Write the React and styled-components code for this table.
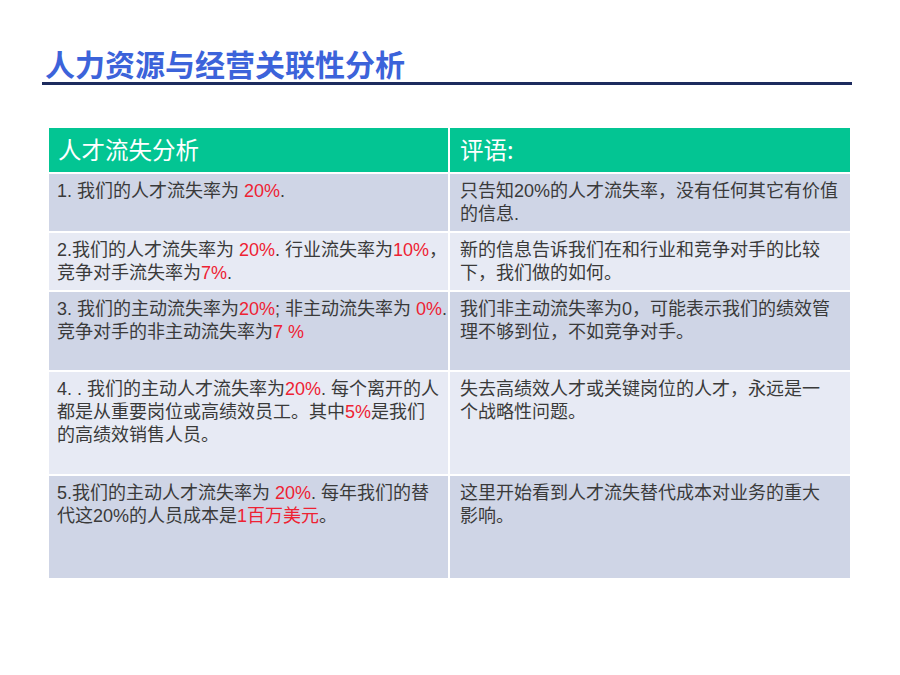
import React from "react";
import styled, { createGlobalStyle } from "styled-components";

const Global = createGlobalStyle`
  html, body { margin: 0; padding: 0; background: #ffffff; }
  body { font-family: "Noto Sans CJK SC", "Noto Sans", sans-serif; }
`;

const Page = styled.div`
  width: 900px;
  height: 675px;
  padding-top: 45px;
  box-sizing: border-box;
  background: #fff;
`;

const Title = styled.h1`
  margin: 0 0 0 45px;
  font-family: "Noto Sans CJK SC", sans-serif;
  font-weight: 700;
  font-size: 30px;
  line-height: 36px;
  color: #3c63da;
  letter-spacing: 0;
`;

const Rule = styled.div`
  margin: 1px 0 0 42px;
  width: 810px;
  height: 3px;
  background: #1d2b5e;
`;

const Table = styled.div`
  margin: 43px 0 0 49px;
  width: 801px;
  display: grid;
  grid-template-columns: 399px 400px;
  grid-template-rows: 44px 57px 57px 78px 102px 102px;
  gap: 2px;
`;

const HeadCell = styled.div`
  background: #03c593;
  color: #ffffff;
  font-size: 23.5px;
  display: flex;
  align-items: center;
  padding-left: ${(p) => (p.$right ? "10px" : "9px")};
  padding-bottom: 2px;
`;

const Cell = styled.div`
  background: ${(p) => (p.$dark ? "#cfd5e6" : "#e7eaf4")};
  color: #3a3a3a;
  font-family: "Liberation Sans", "Noto Sans CJK SC", sans-serif;
  font-size: 18px;
  padding: 6px 0 0 ${(p) => (p.$right ? "10px" : "8px")};
`;

const Line = styled.div`
  height: 23px;
  line-height: 23px;
  white-space: nowrap;
`;

const Red = styled.span`
  color: #ee2233;
`;

const rows = [
  {
    left: [<>1. 我们的人才流失率为 <Red>20%</Red>.</>],
    right: [<>只告知20%的人才流失率，没有任何其它有价值</>, <>的信息.</>],
  },
  {
    left: [
      <>2.我们的人才流失率为 <Red>20%</Red>. 行业流失率为<Red>10%</Red>，</>,
      <>竞争对手流失率为<Red>7%</Red>.</>,
    ],
    right: [<>新的信息告诉我们在和行业和竞争对手的比较</>, <>下，我们做的如何。</>],
  },
  {
    left: [
      <>3. 我们的主动流失率为<Red>20%</Red>; 非主动流失率为 <Red>0%</Red>.</>,
      <>竞争对手的非主动流失率为<Red>7 %</Red></>,
    ],
    right: [<>我们非主动流失率为0，可能表示我们的绩效管</>, <>理不够到位，不如竞争对手。</>],
  },
  {
    left: [
      <>4. . 我们的主动人才流失率为<Red>20%</Red>. 每个离开的人</>,
      <>都是从重要岗位或高绩效员工。其中<Red>5%</Red>是我们</>,
      <>的高绩效销售人员。</>,
    ],
    right: [<>失去高绩效人才或关键岗位的人才，永远是一</>, <>个战略性问题。</>],
  },
  {
    left: [
      <>5.我们的主动人才流失率为 <Red>20%</Red>. 每年我们的替</>,
      <>代这20%的人员成本是<Red>1百万美元</Red>。</>,
    ],
    right: [<>这里开始看到人才流失替代成本对业务的重大</>, <>影响。</>],
  },
];

export default function App() {
  return (
    <Page>
      <Global />
      <Title>人力资源与经营关联性分析</Title>
      <Rule />
      <Table>
        <HeadCell>人才流失分析</HeadCell>
        <HeadCell $right>评语:</HeadCell>
        {rows.map((r, i) => (
          <React.Fragment key={i}>
            <Cell $dark={i % 2 === 0}>
              {r.left.map((l, j) => (
                <Line key={j}>{l}</Line>
              ))}
            </Cell>
            <Cell $dark={i % 2 === 0} $right>
              {r.right.map((l, j) => (
                <Line key={j}>{l}</Line>
              ))}
            </Cell>
          </React.Fragment>
        ))}
      </Table>
    </Page>
  );
}
